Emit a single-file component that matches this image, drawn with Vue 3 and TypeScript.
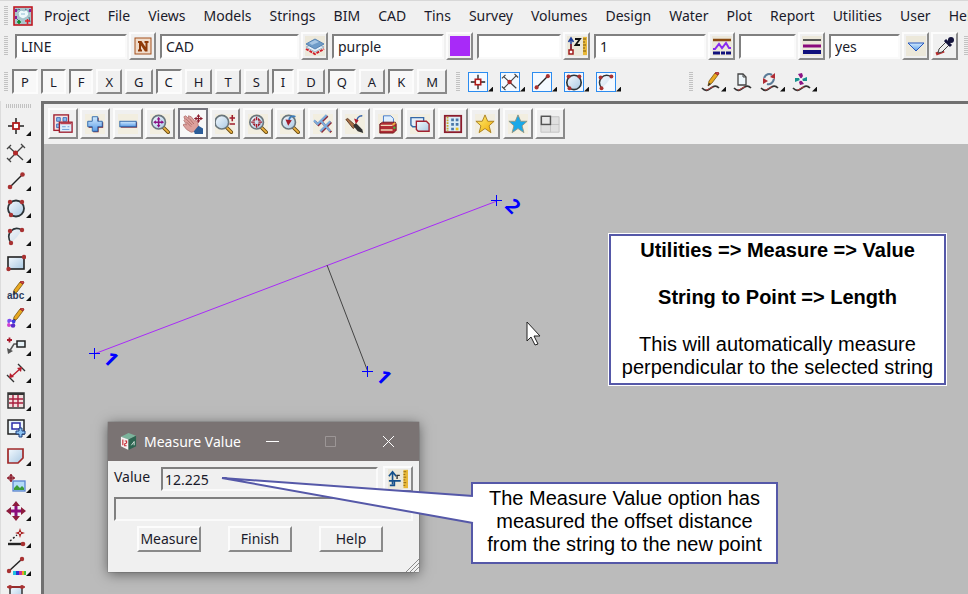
<script setup lang="ts">
import { ref } from 'vue'

interface Field {
  label: string
  value: string
  icon: string
  size: string
}

interface Toggle {
  key: string
  on: boolean
}

const menus = [
  'Project', 'File', 'Views', 'Models', 'Strings', 'BIM', 'CAD', 'Tins', 'Survey',
  'Volumes', 'Design', 'Water', 'Plot', 'Report', 'Utilities', 'User', 'Help',
]

const fields = ref<Field[]>([
  { label: 'Name', value: 'LINE', icon: 'name', size: 'medium' },
  { label: 'Model', value: 'CAD', icon: 'layers', size: 'large' },
  { label: 'Colour', value: 'purple', icon: 'swatch', size: 'medium' },
  { label: 'Height', value: '', icon: 'height', size: 'small' },
  { label: 'Line style', value: '1', icon: 'linestyle', size: 'medium' },
  { label: 'Weight', value: '', icon: 'weight', size: 'tiny' },
  { label: 'Tinable', value: 'yes', icon: 'down', size: 'short' },
])

const toggles = ref<Toggle[]>(
  [...'PLFXGCHTSIDQAKM'].map((key) => ({ key, on: 'PLFCIQK'.includes(key) })),
)

const snaps = ['point', 'cross', 'line', 'circle', 'arc']
const edits = [
  { icon: 'edit', more: true },
  { icon: 'page', more: false },
  { icon: 'refresh', more: true },
  { icon: 'pinwheel', more: true },
]

const tools = [
  'point', 'cross', 'line', 'circle', 'arc', 'rect', 'text', 'paint', 'leader', 'dimension',
  'table', 'viewport', 'polygon', 'image', 'move', 'angle', 'colourline', 'frame',
]

const viewTools = [
  'windows', 'plus', 'minus', 'zoomall', 'pan', 'zoomscale', 'zoomin', 'zoomback', 'ticks',
  'brush', 'print', 'copy', 'building', 'star', 'bluestar', 'panes',
]

const measured = ref('12.225')
const message = ref('')
</script>

<template>
  <div class="app">
    <svg class="sprite" aria-hidden="true">
      <defs>
        <linearGradient id="glass" x1="0" y1="0" x2="1" y2="1">
          <stop offset="0" stop-color="#f4faff" />
          <stop offset="1" stop-color="#a9c8e2" />
        </linearGradient>
        <linearGradient id="sky" x1="0" y1="0" x2="0" y2="1">
          <stop offset="0" stop-color="#d4ecff" />
          <stop offset="1" stop-color="#5a9be6" />
        </linearGradient>
        <linearGradient id="gold" x1="0" y1="0" x2="1" y2="1">
          <stop offset="0" stop-color="#fff27a" />
          <stop offset="1" stop-color="#f0a800" />
        </linearGradient>
      </defs>

      <symbol id="logo" viewBox="0 0 20 20">
        <rect x="1" y="1" width="18" height="18" fill="#a9c6cc" stroke="#c01822" stroke-width="1.600" />
        <path d="M3 5l3-2 2 2M12 3l5 3M3 12l4 4M16 11l1 5" stroke="#4a6f86" fill="none" />
        <path d="M5 7l3-3 3 1 3-1 2 4-2 3-4 2-4-2z" fill="#eef8fb" stroke="#9fc0cc" />
        <path d="M8 8h4" stroke="#8fbcd4" />
        <rect x="2" y="3" width="2" height="3" fill="#8a1c9c" />
        <rect x="16" y="3" width="2" height="3" fill="#8a1c9c" />
        <rect x="2" y="10" width="2" height="3" fill="#8a1c9c" />
        <path d="M4 16h4M6 14v4" stroke="#0c8a2c" stroke-width="1.600" />
        <path d="M12 15h5M14.500 13v5" stroke="#e0202c" stroke-width="1.600" />
      </symbol>

      <symbol id="name" viewBox="0 0 20 20">
        <rect x="2" y="2" width="16" height="16" fill="#f0dccb" stroke="#a4501c" />
        <path d="M5 5h3.500l4 6V7h-1V5H15.500v2h-1v8.500h-2.500L8 9.500v4h1v2H5v-2h1V7H5z" fill="#8f3a08" />
      </symbol>
      <symbol id="layers" viewBox="0 0 20 20">
        <rect width="20" height="20" fill="#ece8da" />
        <path d="M1 13l9 5 9-5" fill="none" stroke="#d0202c" stroke-width="2" stroke-dasharray="3 1" />
        <path d="M1 11l9-4 9 4-9 5z" fill="#e8f1f8" stroke="#9ab2c8" />
        <path d="M1 8l9-5 9 5-9 5z" fill="#6f9cc8" stroke="#5784b4" />
        <path d="M4 7l6-3 4 2-7 3z" fill="#a6c6e4" />
      </symbol>
      <symbol id="swatch" viewBox="0 0 20 20">
        <rect x="0" y="0" width="20" height="20" fill="#a82af8" />
      </symbol>
      <symbol id="height" viewBox="0 0 20 20">
        <rect width="20" height="20" fill="#ece8da" />
        <path d="M4 14V3M1.500 6L4 2l2.500 4" fill="none" stroke="#1f3f9c" stroke-width="1.500" />
        <path d="M4 14V8" stroke="#a01c1c" stroke-width="1.500" />
        <rect x="2" y="14" width="4" height="4" fill="#fff" stroke="#a01c1c" stroke-width="1.500" />
        <path d="M8 3h5L8.500 9H13" fill="none" stroke="#111" stroke-width="1.800" />
        <rect x="16" y="1" width="4" height="18" fill="#e8b838" />
        <path d="M16 3h3M16 6h2M16 9h3M16 12h2M16 15h3" stroke="#7a5810" />
      </symbol>
      <symbol id="linestyle" viewBox="0 0 20 20">
        <rect width="20" height="20" fill="#ece8da" />
        <path d="M1 4h18" stroke="#8a4a12" stroke-width="2.500" />
        <path d="M1 13h2l4-5 3 4 4-5 3 5h2" fill="none" stroke="#8a2af0" stroke-width="2" />
        <path d="M1 17h7M9 17h4M14 17h5" stroke="#10107c" stroke-width="3" />
      </symbol>
      <symbol id="weight" viewBox="0 0 20 20">
        <rect width="20" height="20" fill="#ece8da" />
        <path d="M1 4h18" stroke="#555" stroke-width="2" />
        <path d="M1 10h18" stroke="#8a0a7c" stroke-width="3" />
        <path d="M1 16h18" stroke="#10107c" stroke-width="4" />
      </symbol>
      <symbol id="down" viewBox="0 0 20 20">
        <rect width="20" height="20" fill="#ece8da" />
        <path d="M2 7h16l-8 8z" fill="url(#sky)" stroke="#2456c0" />
      </symbol>
      <symbol id="dropper" viewBox="0 0 20 20">
        <path d="M1 18l8-3" stroke="#b83030" stroke-width="3" />
        <path d="M3 17l1-4 8-8 3 3-8 8z" fill="#eee" stroke="#444" />
        <path d="M10 4l6 6M13 7l3-4" stroke="#14143c" stroke-width="3" />
        <circle cx="16" cy="4" r="3" fill="#14143c" />
      </symbol>

      <symbol id="point" viewBox="0 0 20 20">
        <path d="M10 2v16M2 10h16" stroke="#222" stroke-width="1.500" />
        <rect x="7" y="7" width="6" height="6" fill="#fff" stroke="#b01c1c" stroke-width="1.800" />
      </symbol>
      <symbol id="cross" viewBox="0 0 20 20">
        <path d="M3 4l14 13M17 3L3 17M1 6l4-4M15 1l4 4M1 15l4 4" fill="none" stroke="#444" stroke-width="1.300" />
        <circle cx="9.500" cy="10" r="2.500" fill="#b02828" />
      </symbol>
      <symbol id="line" viewBox="0 0 20 20">
        <path d="M4 16L16 4" stroke="#222" stroke-width="1.500" />
        <circle cx="4" cy="16" r="2.300" fill="#a83232" />
        <circle cx="16.500" cy="3.500" r="2.300" fill="#a83232" />
      </symbol>
      <symbol id="circle" viewBox="0 0 20 20">
        <circle cx="10" cy="10.500" r="8" fill="url(#glass)" stroke="#2c3438" stroke-width="1.800" />
        <circle cx="4" cy="4" r="2.200" fill="#a83232" />
        <circle cx="16" cy="4" r="2.200" fill="#a83232" />
        <circle cx="5" cy="17" r="2.200" fill="#a83232" />
      </symbol>
      <symbol id="arc" viewBox="0 0 20 20">
        <path d="M5 17C-1 8 7-1 16 4L11 11z" fill="url(#glass)" opacity=".55" />
        <path d="M5 17C-1 8 7-1 16 4" fill="none" stroke="#2c3438" stroke-width="1.600" />
        <circle cx="4" cy="5" r="2.200" fill="#a83232" />
        <circle cx="16" cy="4" r="2.200" fill="#a83232" />
        <circle cx="5" cy="17" r="2.200" fill="#a83232" />
      </symbol>
      <symbol id="rect" viewBox="0 0 20 20">
        <rect x="2" y="4" width="16" height="12" fill="url(#glass)" stroke="#222" stroke-width="1.600" />
        <circle cx="18" cy="4" r="2.200" fill="#a83232" />
        <circle cx="2.500" cy="16" r="2.200" fill="#a83232" />
      </symbol>
      <symbol id="pencil" viewBox="0 0 20 20">
        <path d="M7 14l1-5 6-8 3 2-6 8z" fill="#e8a820" stroke="#7a5410" stroke-width=".8" />
        <path d="M14 1l3 2 1-2-2-1z" fill="#d05050" stroke="#a02828" />
        <path d="M7 14l1-3 2 1z" fill="#222" />
      </symbol>
      <symbol id="paint" viewBox="0 0 20 20">
        <use href="#pencil" width="20" height="20" />
        <circle cx="3.500" cy="13" r="2.300" fill="#7a4cf0" />
        <circle cx="7.500" cy="13.500" r="2" fill="#3a3ae0" />
        <circle cx="3" cy="17" r="2" fill="#d040d0" />
        <circle cx="7" cy="17.500" r="2.300" fill="#5a2cc8" />
        <circle cx="5" cy="15" r="1.300" fill="#fff" />
      </symbol>
      <symbol id="leader" viewBox="0 0 20 20">
        <path d="M1 4h5M3.500 1.500v5" stroke="#a81c2c" stroke-width="1.800" />
        <path d="M11 8H8l-5 8" fill="none" stroke="#555" stroke-width="1.500" />
        <path d="M1 12l1 6 5-3z" fill="#555" />
        <rect x="11" y="5" width="8" height="6" fill="#e4f0f6" stroke="#222" stroke-width="1.500" />
      </symbol>
      <symbol id="dimension" viewBox="0 0 20 20">
        <path d="M1 12l7 7M12 1l7 7" stroke="#333" stroke-width="1.400" />
        <path d="M5 14L15 5" stroke="#b81c2c" stroke-width="1.400" />
        <path d="M3 15l1-5 4 4zM16 4l-1 5-4-4z" fill="#b81c2c" />
      </symbol>
      <symbol id="table" viewBox="0 0 20 20">
        <rect x="2" y="2" width="16" height="15" fill="#f2dede" stroke="#333" stroke-width="1.500" />
        <path d="M2 3h16" stroke="#333" stroke-width="2" />
        <path d="M7 4v12M12 4v12M3 8h14M3 12h14" stroke="#a81c3c" stroke-width="1.400" />
      </symbol>
      <symbol id="viewport" viewBox="0 0 20 20">
        <rect x="2" y="2" width="16" height="14" fill="#eaf4fa" stroke="#222" stroke-width="1.500" />
        <rect x="6" y="5" width="8" height="6" fill="#fff" stroke="#2c2ca8" stroke-width="1.500" />
        <path d="M13 10h3v3h3v3h-3v3h-3v-3h-3v-3h3z" fill="#8cc4f4" stroke="#1c3c7c" />
      </symbol>
      <symbol id="polygon" viewBox="0 0 20 20">
        <path d="M2 3h15v9l-5 5H2z" fill="url(#glass)" stroke="#a02828" stroke-width="1.700" />
      </symbol>
      <symbol id="image" viewBox="0 0 20 20">
        <path d="M5 1v8M1 5h8" stroke="#8c1c2c" stroke-width="1.600" />
        <circle cx="5" cy="5" r="2.500" fill="none" stroke="#8c1c2c" />
        <rect x="7" y="8" width="12" height="10" fill="#b4dcf8" stroke="#5a84d0" stroke-width="1.300" />
        <path d="M8 17v-2l3-3 3 3 2-2 2 2v2z" fill="#3c9c38" />
      </symbol>
      <symbol id="move" viewBox="0 0 20 20">
        <path d="M10 4v12M4 10h12" stroke="#8c0c7c" stroke-width="3" />
        <path d="M10 0l4 5H6zM10 20l4-5H6zM0 10l5-4v8zM20 10l-5-4v8z" fill="#8c1c3c" />
      </symbol>
      <symbol id="angle" viewBox="0 0 20 20">
        <path d="M2 16h15" stroke="#222" stroke-width="2.400" />
        <path d="M4 13l7-6" stroke="#222" stroke-width="1.500" stroke-dasharray="2 2" />
        <path d="M14 0l1.200 3.800L19 5l-3.800 1.200L14 10l-1.200-3.800L9 5l3.800-1.200z" fill="#a81c1c" />
        <circle cx="14" cy="5" r="1" fill="#f0f0f0" />
        <circle cx="17" cy="16" r="2.300" fill="#a83232" />
      </symbol>
      <symbol id="colourline" viewBox="0 0 20 20">
        <path d="M3 15L16 3" stroke="#222" stroke-width="1.500" />
        <circle cx="3" cy="15" r="2.200" fill="#a83232" />
        <circle cx="16" cy="3" r="2.200" fill="#a83232" />
        <path d="M7 17h3" stroke="#20c0e0" stroke-width="4" />
        <path d="M10 17h3" stroke="#3030d0" stroke-width="4" />
        <path d="M13 17h3" stroke="#d03090" stroke-width="4" />
        <path d="M16 17h2" stroke="#f0a020" stroke-width="4" />
        <path d="M18 17h2" stroke="#40c040" stroke-width="4" />
      </symbol>
      <symbol id="frame" viewBox="0 0 20 20">
        <rect x="4" y="4" width="12" height="14" fill="url(#glass)" stroke="#333" stroke-width="1.500" />
        <path d="M1 4h18" stroke="#a81c1c" stroke-width="1.500" />
        <circle cx="4" cy="4" r="2" fill="#a83232" />
        <circle cx="16" cy="4" r="2" fill="#a83232" />
      </symbol>

      <symbol id="wave" viewBox="0 0 20 20">
        <path d="M1 16c4 4 6 2 9 0s5-3 8 0" fill="none" stroke="#333" stroke-width="1.700" />
        <path d="M5 18c3 0 4-3 7-3" fill="none" stroke="#c04040" />
      </symbol>
      <symbol id="edit" viewBox="0 0 20 20">
        <use href="#wave" width="20" height="20" />
        <use href="#pencil" width="20" height="20" />
      </symbol>
      <symbol id="page" viewBox="0 0 20 20">
        <use href="#wave" width="20" height="20" />
        <path d="M5 2h5l3 3v8H5z" fill="#eef6fa" stroke="#444" stroke-width="1.300" />
        <path d="M10 2v3h3" fill="none" stroke="#444" />
      </symbol>
      <symbol id="refresh" viewBox="0 0 20 20">
        <use href="#wave" width="20" height="20" />
        <path d="M4 6c2-4 5-5 8-3" fill="none" stroke="#5c7c98" stroke-width="2.200" />
        <path d="M14 7c-1 4-4 6-7 5" fill="none" stroke="#5c7c98" stroke-width="2.200" />
        <path d="M10 5l5-4v6zM8 9l-5-3v6z" fill="#b02c34" />
      </symbol>
      <symbol id="pinwheel" viewBox="0 0 20 20">
        <use href="#wave" width="20" height="20" />
        <path d="M9 7L6 2l4-1 1 3zM9 8l3 4-4 1-1-3z" fill="#8c1484" />
        <path d="M10 7l5-2v4l-4 0zM8 8l-5 2V6l4 0z" fill="#16908c" />
        <circle cx="9" cy="7.500" r="1.300" fill="#fff" />
      </symbol>

      <symbol id="windows" viewBox="0 0 22 22">
        <rect x="1" y="1" width="16" height="17" fill="#f6e4e4" stroke="#a02030" stroke-width="1.500" />
        <path d="M4 4h4v4H4zM11 4h4v4h-4zM4 11h4v4H4z" fill="#8cbcec" stroke="#3a6cb8" />
        <rect x="7" y="9" width="14" height="11" fill="#dceefc" stroke="#a02030" stroke-width="1.500" />
        <path d="M8 10.500h12" stroke="#c04050" stroke-width="1.500" />
        <path d="M10 14h4M10 17h8M16 14h2" stroke="#6a9ad8" />
      </symbol>
      <symbol id="plus" viewBox="0 0 22 22">
        <rect width="22" height="22" fill="#f2eee0" />
        <path d="M9 4h6v5h5v6h-5v5H9v-5H4V9h5z" fill="#7c1c2c" />
        <path d="M8 3h6v5h5v6h-5v5H8v-5H3V8h5z" fill="url(#sky)" stroke="#2c64a8" />
      </symbol>
      <symbol id="minus" viewBox="0 0 22 22">
        <rect width="22" height="22" fill="#f2eee0" />
        <rect x="3" y="9" width="18" height="6" fill="#7c1c2c" />
        <rect x="2" y="8" width="18" height="6" fill="url(#sky)" stroke="#2c64a8" />
      </symbol>
      <symbol id="lens" viewBox="0 0 22 22">
        <path d="M14 14l6 6" stroke="#6a4a10" stroke-width="4" stroke-linecap="round" />
        <path d="M15 15l5 5" stroke="#e8b040" stroke-width="2" stroke-linecap="round" />
        <circle cx="9.500" cy="9" r="7.500" fill="url(#glass)" stroke="#6a767c" stroke-width="1.800" />
      </symbol>
      <symbol id="zoomall" viewBox="0 0 22 22">
        <rect width="22" height="22" fill="#f2eee0" />
        <use href="#lens" width="22" height="22" />
        <path d="M9.500 5v8M5.500 9h8" stroke="#8c1484" stroke-width="1.600" />
        <path d="M9.500 3l2 3h-4zM9.500 15l2-3h-4zM3.500 9l3-2v4zM15.500 9l-3-2v4z" fill="#8c1484" />
      </symbol>
      <symbol id="pan" viewBox="0 0 22 22">
        <path d="M1 3l2-1 3 3V2l3 1 4 5 1-1 2 2 1 5-3 5-5 1-5-3-4-5 1-1 3 1L1 7l1-1z" fill="#dca09c" stroke="#b87c78" />
        <path d="M3 5l7 7M7 5l5 6M4 9l5 5" stroke="#b06c68" />
        <path d="M12 19l5-6 5 3v6H13z" fill="#2c5c98" />
        <path d="M17 1v8M13 5h8" stroke="#8c1c2c" stroke-width="1.300" />
        <path d="M17 0l2 3h-4zM17 10l2-3h-4zM12 5l3-2v4zM22 5l-3-2v4z" fill="#8c1c2c" />
      </symbol>
      <symbol id="zoomscale" viewBox="0 0 22 22">
        <rect width="22" height="22" fill="#f2eee0" />
        <use href="#lens" x="-2" width="22" height="22" />
        <path d="M19 1v7M16 4.500h6M16 11h6" stroke="#a01c2c" stroke-width="1.700" />
      </symbol>
      <symbol id="zoomin" viewBox="0 0 22 22">
        <rect width="22" height="22" fill="#f2eee0" />
        <use href="#lens" width="22" height="22" />
        <path d="M9.500 3v4M9.500 11v4M3.500 9h4M11.500 9h4" stroke="#a01c2c" stroke-width="1.500" />
        <path d="M8 7.500H4.500L8 4zM11 7.500h3.500L11 4zM8 10.500H4.500L8 14zM11 10.500h3.500L11 14z" fill="#a01c2c" />
      </symbol>
      <symbol id="zoomback" viewBox="0 0 22 22">
        <rect width="22" height="22" fill="#f2eee0" />
        <use href="#lens" width="22" height="22" />
        <path d="M17 3c-4-2-7 1-7 4" fill="none" stroke="#3c7cb8" stroke-width="2" />
        <path d="M6 6l7 1-4 6z" fill="#a01c2c" />
      </symbol>
      <symbol id="ticks" viewBox="0 0 22 22">
        <rect width="22" height="22" fill="#f2eee0" />
        <path d="M2 8l4 4L16 2M9 20L20 9M10 9l10 11" fill="none" stroke="#8c2c3c" stroke-width="2.600" />
        <path d="M1 7l4 4L15 1M8 19L19 8M9 8l10 11" fill="none" stroke="#7cacdc" stroke-width="2.400" />
      </symbol>
      <symbol id="brush" viewBox="0 0 22 22">
        <rect width="22" height="22" fill="#f2eee0" />
        <path d="M1 6l2-1 9 8-3 3z" fill="#a87048" stroke="#5c3c28" />
        <path d="M9 13l3-3 7 7 1 4-6-2z" fill="#333" />
        <path d="M19 2c-4 0-6 3-6 6" fill="none" stroke="#2c5ca8" stroke-width="1.600" />
        <path d="M10 5l5 2-3 4z" fill="#b01c2c" />
      </symbol>
      <symbol id="print" viewBox="0 0 22 22">
        <rect width="22" height="22" fill="#f2eee0" />
        <path d="M6 11V2h8l3 3v6z" fill="#e0f0ff" stroke="#3c74c8" />
        <path d="M2 11l3-2h14l1 2v7l-3 3H2z" fill="#b02c34" stroke="#6c141c" />
        <path d="M3 12.500h13M3 17.500h13" stroke="#f0d8b8" stroke-width="1.600" />
        <path d="M16 12l3-2" stroke="#e8b040" stroke-width="2" />
        <circle cx="18" cy="15" r="1.300" fill="#40c040" />
      </symbol>
      <symbol id="copy" viewBox="0 0 22 22">
        <rect width="22" height="22" fill="#f2eee0" />
        <path d="M1 4h14v10H3l-2-2z" fill="#e4f0fa" stroke="#3468a8" stroke-width="1.500" />
        <path d="M7 8h11l3 3v8H9l-2-2z" fill="url(#glass)" stroke="#a02030" stroke-width="1.500" />
      </symbol>
      <symbol id="building" viewBox="0 0 22 22">
        <rect x="2" y="2" width="18" height="18" fill="#dcecf6" stroke="#8c1c2c" stroke-width="2" />
        <path d="M5 3v16" stroke="#c8a830" stroke-width="2" stroke-dasharray="2 1" />
        <path d="M9 5h3v3H9zM14 5h3v3h-3zM9 10h3v3H9zM14 10h3v3h-3zM9 15h3v3H9z" fill="#4c78a8" />
        <path d="M14 15h3v3h-3z" fill="#e8c020" />
      </symbol>
      <symbol id="star" viewBox="0 0 22 22">
        <rect width="22" height="22" fill="#f2eee0" />
        <path d="M11 1l3 7h7l-5.500 5 2 7.500L11 16l-6.500 4.500 2-7.500L1 8h7z" fill="url(#gold)" stroke="#a87c1c" />
      </symbol>
      <symbol id="bluestar" viewBox="0 0 22 22">
        <rect width="22" height="22" fill="#f2eee0" />
        <path d="M11 1l3 7h7l-5.500 5 2 7.500L11 16l-6.500 4.500 2-7.500L1 8h7z" fill="#18a8e8" stroke="#8c9484" />
      </symbol>
      <symbol id="panes" viewBox="0 0 22 22">
        <path d="M1 3h20v17H1z" fill="#e0e0e0" stroke="#c0c0c0" />
        <path d="M11.500 3v17M1 11.500h20" stroke="#c0c0c0" />
        <rect x="1.500" y="2.500" width="10" height="9" fill="#e8e8e8" stroke="#555" stroke-width="1.600" />
      </symbol>

      <symbol id="ruler" viewBox="0 0 22 22">
        <rect width="22" height="22" fill="#ece8da" />
        <path d="M5 3v14M1 8l4-5 4 5" fill="none" stroke="#14508c" stroke-width="1.800" />
        <path d="M1 13h13M2 18h5v-5" fill="none" stroke="#14508c" stroke-width="1.800" />
        <path d="M10 11V7h3" fill="none" stroke="#333" stroke-width="1.500" />
        <rect x="17" y="1" width="5" height="20" fill="#e8b838" />
        <path d="M17 3h3M17 6h2M17 9h3M17 12h2M17 15h3M17 18h2" stroke="#8c6410" />
      </symbol>
      <symbol id="cube" viewBox="0 0 18 20">
        <path d="M1 5l8-4 8 3-8 4z" fill="#7cb49c" />
        <path d="M1 5l8 3v11l-8-4z" fill="#f4f4f4" />
        <path d="M9 8l8-4v11l-8 4z" fill="#2c6450" />
        <path d="M3 8v6M5 9.500h2v2l-2 1v2h2" fill="none" stroke="#c82c34" stroke-width="1.200" />
        <path d="M12 14l3-4v4" fill="none" stroke="#d8e8e0" />
      </symbol>
    </svg>

    <header class="bars">
      <nav class="menubar" aria-label="Main menu">
        <span class="grip"></span>
        <svg class="logo"><use href="#logo" /></svg>
        <button v-for="menu in menus" :key="menu" type="button" class="menu">{{ menu }}</button>
      </nav>

      <div class="fieldbar">
        <span class="grip"></span>
        <div v-for="field in fields" :key="field.label" class="field">
          <input v-model="field.value" type="text" class="sunken" :class="field.size" :aria-label="field.label" />
          <button type="button" class="raised square" :aria-label="`Choose ${field.label}`">
            <svg class="icon"><use :href="`#${field.icon}`" /></svg>
          </button>
        </div>
        <button type="button" class="raised square" aria-label="Pick attributes">
          <svg class="icon"><use href="#dropper" /></svg>
        </button>
        <span class="grip last"></span>
      </div>

      <div class="snapbar">
        <span class="grip"></span>
        <div class="toggles">
          <button
            v-for="toggle in toggles"
            :key="toggle.key"
            type="button"
            class="toggle"
            :class="{ on: toggle.on }"
            :aria-pressed="toggle.on"
            @click="toggle.on = !toggle.on"
          >{{ toggle.key }}</button>
        </div>
        <span class="grip"></span>
        <div class="snaps">
          <button v-for="snap in snaps" :key="snap" type="button" class="flat" :aria-label="`Snap ${snap}`">
            <svg class="icon boxed"><use :href="`#${snap}`" /></svg>
            <span class="more"></span>
          </button>
        </div>
        <span class="grip"></span>
        <div class="edits">
          <button v-for="edit in edits" :key="edit.icon" type="button" class="flat" :aria-label="edit.icon">
            <svg class="icon"><use :href="`#${edit.icon}`" /></svg>
            <span v-if="edit.more" class="more"></span>
          </button>
        </div>
      </div>
    </header>

    <div class="workspace">
      <aside class="toolbox">
        <span class="grip flatgrip"></span>
        <button v-for="tool in tools" :key="tool" type="button" class="flat tool" :aria-label="tool">
          <svg v-if="tool === 'text'" class="icon lettered">
            <use href="#pencil" />
            <text x="1" y="18" class="abc">abc</text>
          </svg>
          <svg v-else class="icon"><use :href="`#${tool}`" /></svg>
          <span class="more"></span>
        </button>
      </aside>

      <main class="view">
        <div class="viewbar">
          <button
            v-for="tool in viewTools"
            :key="tool"
            type="button"
            class="raised viewtool"
            :class="{ active: tool === 'pan' }"
            :aria-label="tool"
          >
            <svg class="icon"><use :href="`#${tool}`" /></svg>
          </button>
        </div>

        <div class="canvas">
          <svg class="drawing">
            <path class="string" d="M50 210L453 57" />
            <path class="offset" d="M283 121L324 228" />
            <path class="node" d="M45 209.500h11M50.500 204v11M447 56.500h11M452.500 51v11M318 227.500h11M323.500 222v11" />
            <text class="vertex" transform="translate(58 216) rotate(45)">1</text>
            <text class="vertex" transform="translate(331 234) rotate(45)">1</text>
            <text class="vertex" transform="translate(460 63) rotate(45)">2</text>
            <path class="cursor" d="M483 178v19l4-4 4 8 3-1-4-8h6z" />
          </svg>

          <section class="note">
            <p><strong>Utilities =&gt; Measure =&gt; Value</strong></p>
            <p><strong>String to Point =&gt; Length</strong></p>
            <p>This will automatically measure<br />perpendicular to the selected string</p>
          </section>

          <section class="dialog" role="dialog" aria-labelledby="dialog-title">
            <header class="titlebar">
              <svg class="cube"><use href="#cube" /></svg>
              <h1 id="dialog-title">Measure Value</h1>
              <button type="button" aria-label="Minimise">
                <svg class="glyph"><path d="M0 6.500h13" /></svg>
              </button>
              <button type="button" class="dim" aria-label="Maximise">
                <svg class="glyph"><path d="M1.500 1.500h10v10h-10z" /></svg>
              </button>
              <button type="button" aria-label="Close">
                <svg class="glyph"><path d="M1 1l11 11M12 1L1 12" /></svg>
              </button>
            </header>
            <form class="form" @submit.prevent>
              <div class="valuerow">
                <label for="value">Value</label>
                <input id="value" v-model="measured" type="text" class="sunken grey" />
                <button type="button" class="raised ruler" aria-label="Measure options">
                  <svg class="icon"><use href="#ruler" /></svg>
                </button>
              </div>
              <input v-model="message" type="text" class="sunken grey" aria-label="Message" readonly />
              <div class="actions">
                <button type="button" class="raised action">Measure</button>
                <button type="button" class="raised action">Finish</button>
                <button type="button" class="raised action">Help</button>
              </div>
            </form>
            <svg class="resize"><path d="M1 14L14 1M5 14l9-9M9 14l5-5" /></svg>
          </section>

          <section class="callout">
            <p>The Measure Value option has<br />measured the offset distance<br />from the string to the new point</p>
            <svg class="pointer">
              <path class="fill" d="M254 15L1 -3L254 42z" />
              <path class="edge" d="M252 15L1 -3L252 42" />
            </svg>
          </section>
        </div>
      </main>
    </div>
  </div>
</template>

<style>
body {
  margin: 0;
  overflow: hidden;
}
</style>

<style scoped>
.app {
  display: flex;
  flex-direction: column;
  height: 100vh;
  overflow: hidden;
  background: #f0f0f0;
  color: #1a1a2a;
  font: 14px/18px "Noto Sans", "Open Sans", sans-serif;
}

.app * {
  box-sizing: border-box;
}

.sprite {
  position: absolute;
  width: 0;
  height: 0;
}

.lettered {
  overflow: visible;
}

.abc {
  font: bold 10px "Liberation Sans", sans-serif;
  fill: #2c3c5c;
}

button {
  display: flex;
  align-items: center;
  justify-content: center;
  flex: none;
  margin: 0;
  padding: 0;
  border: 0;
  background: none;
  color: inherit;
  font: inherit;
}

svg {
  display: block;
  flex: none;
}

.grip {
  flex: none;
  width: 4px;
  height: 20px;
  background: repeating-linear-gradient(#c2c2c2 0 1px, #f0f0f0 1px 2px);
}

.menubar,
.fieldbar,
.snapbar {
  display: flex;
  align-items: center;
  padding-left: 4px;
  white-space: nowrap;
}

.menubar {
  height: 30px;
  border-top: 1px solid #d8d8d8;
}

.logo {
  width: 20px;
  height: 20px;
  margin: 0 2px 0 5px;
}

.menu {
  padding: 0 9px;
}

.fieldbar {
  height: 32px;
}

.field {
  display: flex;
  align-items: center;
  gap: 2px;
  margin-right: 4px;
}

.grip + .field {
  margin-left: 7px;
}

.field:nth-last-child(3) {
  margin-right: 2px;
}

.sunken {
  height: 25px;
  margin: 0;
  padding: 0 4px;
  border: 2px solid #fafafa;
  border-top-color: #808080;
  border-left-color: #808080;
  background: #fff;
  color: #1a1a2a;
  font: inherit;
  outline: 0;
}

.large {
  width: 139px;
}

.medium {
  width: 112px;
}

.small {
  width: 84px;
}

.short {
  width: 71px;
}

.tiny {
  width: 57px;
}

.raised {
  border: 2px solid #fcfcfc;
  border-right-color: #8a8a8a;
  border-bottom-color: #8a8a8a;
  background: #f0f0f0;
}

.square {
  width: 27px;
  height: 28px;
}

.last {
  margin-left: 6px;
}

.icon {
  width: 20px;
  height: 20px;
}

.snapbar {
  height: 39px;
}

.toggles {
  display: flex;
  gap: 3px;
  margin: 0 9px 0 4px;
}

.toggle {
  height: 25px;
  padding: 0 7px;
  border: 2px solid #fcfcfc;
  border-right-color: #8a8a8a;
  border-bottom-color: #8a8a8a;
  font-size: 13px;
}

.toggle.on {
  border-color: #808080 #fcfcfc #fcfcfc #808080;
  background: #f8f8f8;
}

.flat {
  align-items: flex-end;
}

.more {
  width: 5px;
  height: 5px;
  background: #111;
  clip-path: polygon(100% 0, 100% 100%, 0 100%);
}

.snaps {
  display: flex;
  gap: 7px;
  margin: 0 68px 0 8px;
}

.edits {
  display: flex;
  gap: 7px;
  margin-left: 8px;
}

.boxed {
  border: 1px solid #2c8cf0;
  background: #f4f9ff;
}

.workspace {
  display: flex;
  flex: 1;
  min-height: 0;
}

.toolbox {
  display: flex;
  flex: none;
  flex-direction: column;
  width: 41px;
  padding: 3px 0 0 5px;
  overflow: hidden;
  border-left: 1px solid #dcdcdc;
}

.flatgrip {
  width: 25px;
  height: 4px;
  margin-bottom: 3px;
  background: repeating-linear-gradient(90deg, #c2c2c2 0 1px, #f0f0f0 1px 2px);
}

.tool {
  align-self: flex-start;
  height: 27px;
  padding-bottom: 3px;
}

.tool:nth-child(even) {
  height: 28px;
}

.view {
  display: flex;
  flex: 1;
  flex-direction: column;
  min-width: 0;
  border-top: 3px solid #707070;
  border-left: 3px solid #707070;
}

.viewbar {
  display: flex;
  gap: 2px;
  height: 40px;
  padding: 4px 0 0 4px;
}

.viewtool {
  width: 30px;
  height: 31px;
}

.viewtool:nth-child(even) {
  margin-right: 1px;
}

.active {
  border-color: #77777f;
  background: #f8f8f8;
}

.canvas {
  position: relative;
  flex: 1;
  min-height: 0;
  overflow: hidden;
  background: #bbb;
}

.drawing {
  width: 100%;
  height: 100%;
}

.string {
  stroke: #a82af8;
}

.offset {
  stroke: #444;
}

.node {
  stroke: #00f;
}

.vertex {
  fill: #00f;
  font: bold 20px "Noto Sans", sans-serif;
}

.cursor {
  fill: #fff;
  stroke: #222;
}

.note,
.callout {
  position: absolute;
  border: 2px solid #5558a8;
  background: #fff;
  color: #000;
  font: 20px/23px "Liberation Sans", Arial, sans-serif;
  text-align: center;
  white-space: nowrap;
}

.note {
  top: 90px;
  left: 565px;
  display: grid;
  gap: 24px;
  width: 337px;
  padding: 3px 0 4px;
  outline: 1px solid #fff;
}

.note p,
.callout p {
  margin: 0;
}

.callout {
  top: 338px;
  left: 427px;
  width: 307px;
  padding: 3px 0 6px;
}

.pointer {
  position: absolute;
  top: -3px;
  left: -252px;
  width: 254px;
  height: 48px;
  overflow: visible;
}

.fill {
  fill: #fff;
}

.edge {
  fill: none;
  stroke: #5558a8;
  stroke-width: 2;
}

.dialog {
  position: absolute;
  top: 278px;
  left: 64px;
  width: 311px;
  background: #f0f0f0;
  box-shadow: 0 2px 12px rgba(0, 0, 0, 0.5), 0 0 1px #555;
}

.titlebar {
  display: flex;
  align-items: center;
  height: 39px;
  padding: 0 2px 0 12px;
  background: #7a7373;
  color: #fff;
}

.titlebar h1 {
  flex: 1;
  margin: 0 0 0 7px;
  font: 14px/18px "Noto Sans", "Open Sans", sans-serif;
}

.titlebar button {
  width: 58px;
  height: 39px;
}

.cube {
  width: 17px;
  height: 19px;
}

.glyph {
  width: 13px;
  height: 13px;
  fill: none;
  stroke: #fff;
}

.dim .glyph {
  stroke: #9c9696;
}

.form {
  display: grid;
  gap: 5px;
  padding: 5px 6px 20px;
}

.form .sunken {
  height: 24px;
  padding: 0 2px;
}

.valuerow {
  display: flex;
  align-items: center;
}

.valuerow label {
  width: 47px;
  padding-bottom: 4px;
}

.valuerow input {
  flex: 1;
  min-width: 0;
  margin-right: 5px;
}

.grey {
  background: #f0f0f0;
}

.ruler {
  width: 30px;
  height: 26px;
}

.actions {
  display: flex;
  gap: 27px;
  padding-left: 23px;
}

.action {
  width: 64px;
  height: 26px;
}

.resize {
  position: absolute;
  right: 0;
  bottom: 0;
  width: 14px;
  height: 14px;
  stroke: #8a8a8a;
}
</style>
